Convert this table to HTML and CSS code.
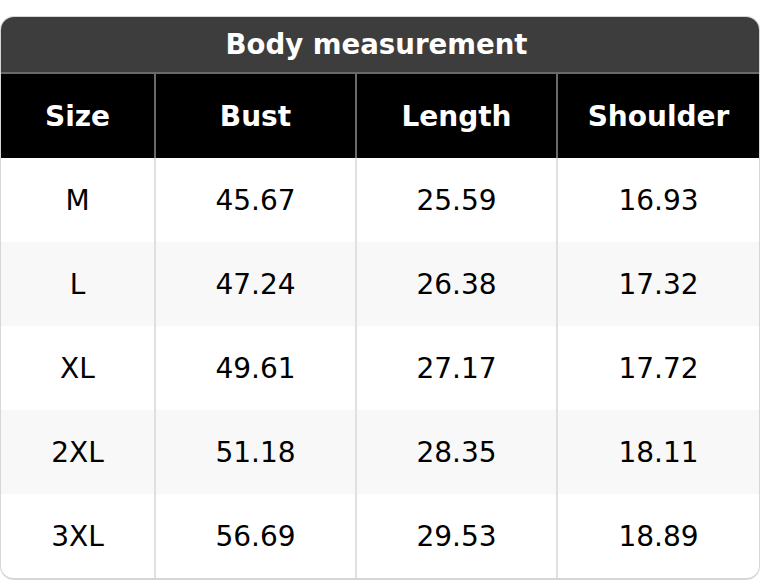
FILE: index.html
```html
<!DOCTYPE html>
<html>
<head>
<meta charset="utf-8">
<link rel="stylesheet" href="styles.css">
</head>
<body>
<div class="card">
  <div class="title">Body measurement</div>
  <table class="sizes">
    <colgroup>
      <col class="c1"><col class="c2"><col class="c3"><col class="c4">
    </colgroup>
    <thead>
      <tr><th>Size</th><th>Bust</th><th>Length</th><th>Shoulder</th></tr>
    </thead>
    <tbody>
      <tr><td>M</td><td>45.67</td><td>25.59</td><td>16.93</td></tr>
      <tr><td>L</td><td>47.24</td><td>26.38</td><td>17.32</td></tr>
      <tr><td>XL</td><td>49.61</td><td>27.17</td><td>17.72</td></tr>
      <tr><td>2XL</td><td>51.18</td><td>28.35</td><td>18.11</td></tr>
      <tr><td>3XL</td><td>56.69</td><td>29.53</td><td>18.89</td></tr>
    </tbody>
  </table>
</div>
</body>
</html>
```
FILE: styles.css
```css
html, body {
  margin: 0;
  padding: 0;
  background: #fff;
}
body {
  padding-top: 16px;
  font-family: "DejaVu Sans", sans-serif;
  font-size: 28px;
  color: #000;
}
.card {
  width: 760px;
  box-sizing: border-box;
  border: 1px solid #d6d6d6;
  border-bottom-width: 2px;
  border-radius: 14px;
  overflow: hidden;
  background: #fff;
}
.title {
  height: 55px;
  padding-right: 7px;
  background: #3d3d3d;
  color: #fff;
  font-weight: bold;
  font-size: 27.6px;
  text-align: center;
  line-height: 55px;
  border-bottom: 2px solid #6a6a6a;
}
.sizes {
  width: 100%;
  border-collapse: collapse;
  table-layout: fixed;
}
.c1 { width: 154px; }
.c2 { width: 201px; }
.c3 { width: 201px; }
.sizes th, .sizes td {
  text-align: center;
  padding: 0;
  height: 84px;
  box-sizing: border-box;
}
.sizes th {
  background: #000;
  color: #fff;
  font-weight: bold;
  border-left: 2px solid #6a6a6a;
}
.sizes td {
  border-left: 2px solid #e0e0e0;
}
.sizes th:first-child, .sizes td:first-child {
  border-left: none;
}
.sizes tbody tr:nth-child(even) td {
  background: #f8f8f8;
}
```
